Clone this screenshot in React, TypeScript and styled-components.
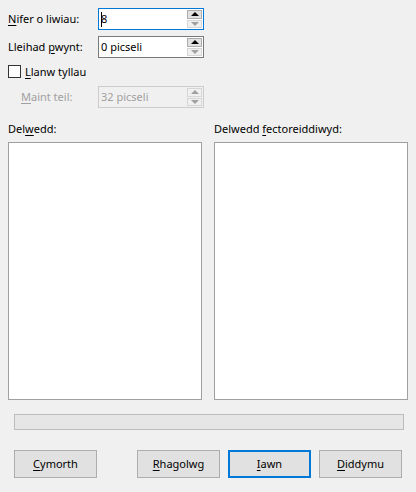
import React from "react";
import styled, { createGlobalStyle, css } from "styled-components";

const Global = createGlobalStyle`
  html, body { margin: 0; padding: 0; background: #f0f0f0; }
  body { font-family: "Noto Sans", "Open Sans", sans-serif; font-size: 11px; color: #000; }
  #root { width: 416px; height: 492px; overflow: hidden; }
`;

const Dialog = styled.div`
  width: 416px;
  height: 492px;
  box-sizing: border-box;
  padding: 8px 8px 0 8px;
  display: flex;
  flex-direction: column;
`;

const Form = styled.div`
  display: flex;
  flex-direction: column;
`;

const FieldRow = styled.div<{ $top: number; $indent?: number }>`
  display: grid;
  grid-template-columns: ${(p) => 90 - (p.$indent || 0)}px 106px;
  height: 22px;
  align-items: center;
  margin-top: ${(p) => p.$top}px;
  padding-left: ${(p) => p.$indent || 0}px;
`;

const Label = styled.span<{ $disabled?: boolean }>`
  line-height: 16px;
  white-space: nowrap;
  color: ${(p) => (p.$disabled ? "#a0a0a0" : "#000")};
`;

const U = styled.span`
  text-decoration: underline;
  text-underline-offset: 2px;
`;

const SpinBox = styled.div<{ $state: "focus" | "normal" | "disabled" }>`
  box-sizing: border-box;
  height: 22px;
  display: flex;
  align-items: stretch;
  background: ${(p) => (p.$state === "disabled" ? "#f0f0f0" : "#fff")};
  border: 1px solid
    ${(p) =>
      p.$state === "focus" ? "#0078d7" : p.$state === "disabled" ? "#cccccc" : "#7a7a7a"};
  color: ${(p) => (p.$state === "disabled" ? "#a0a0a0" : "#000")};
`;

const SpinText = styled.div`
  flex: 1;
  display: flex;
  align-items: center;
  padding-left: 2px;
  line-height: 16px;
  white-space: nowrap;
`;

const Caret = styled.span`
  display: inline-block;
  width: 1px;
  height: 15px;
  background: #000;
  margin-right: -1px;
`;

const SpinButtons = styled.div`
  width: 15px;
  display: flex;
  flex-direction: column;
  padding: 1px 1px 1px 0;
  gap: 1px;
`;

const SpinBtn = styled.div<{ $active: boolean }>`
  flex: 1;
  display: flex;
  align-items: center;
  justify-content: center;
  box-sizing: border-box;
  ${(p) =>
    p.$active
      ? css`
          background: #e1e1e1;
          border: 1px solid #adadad;
        `
      : css`
          background: #f0f0f0;
          border: 1px solid #d6d6d6;
        `}
`;

const Arrow = styled.div<{ $down?: boolean; $color: string }>`
  width: 0;
  height: 0;
  border-left: 4px solid transparent;
  border-right: 4px solid transparent;
  ${(p) =>
    p.$down
      ? css`border-top: 4px solid ${p.$color};`
      : css`border-bottom: 4px solid ${p.$color};`}
`;

const CheckRow = styled.label`
  display: flex;
  align-items: center;
  height: 13px;
  margin-top: 7px;
  gap: 4px;
`;

const CheckBox = styled.span`
  width: 13px;
  height: 13px;
  box-sizing: border-box;
  border: 1px solid #333;
  background: #fff;
  flex: none;
`;

const Panels = styled.div`
  display: grid;
  grid-template-columns: 194px 194px;
  column-gap: 12px;
  margin-top: 13px;
`;

const PanelCol = styled.div`
  display: flex;
  flex-direction: column;
  gap: 5px;
`;

const PanelBox = styled.div`
  height: 258px;
  box-sizing: border-box;
  background: #fff;
  border: 1px solid #a0a0a0;
`;

const Progress = styled.div`
  margin: 14px 4px 0 6px;
  height: 16px;
  box-sizing: border-box;
  background: #e6e6e6;
  border: 1px solid #bcbcbc;
`;

const ButtonBar = styled.div`
  display: flex;
  margin: 20px 6px 0 6px;
  gap: 8px;
`;

const Spacer = styled.div`
  flex: 1;
`;

const Button = styled.button<{ $default?: boolean }>`
  width: 83px;
  height: 28px;
  box-sizing: border-box;
  font: inherit;
  color: #000;
  background: #e1e1e1;
  padding: 0;
  border: ${(p) => (p.$default ? "2px solid #0078d7" : "1px solid #adadad")};
  line-height: 16px;
`;

function Spin({
  value,
  state,
  upActive,
  caret,
}: {
  value: string;
  state: "focus" | "normal" | "disabled";
  upActive: boolean;
  caret?: boolean;
}) {
  const up = upActive ? "#000" : "#a0a0a0";
  return (
    <SpinBox $state={state}>
      <SpinText>
        {caret && <Caret />}
        {value}
      </SpinText>
      <SpinButtons>
        <SpinBtn $active={upActive}>
          <Arrow $color={up} />
        </SpinBtn>
        <SpinBtn $active={false}>
          <Arrow $down $color="#a0a0a0" />
        </SpinBtn>
      </SpinButtons>
    </SpinBox>
  );
}

export default function App() {
  return (
    <>
      <Global />
      <Dialog>
        <Form>
          <FieldRow $top={0}>
            <Label>
              <U>N</U>ifer o liwiau:
            </Label>
            <Spin value="8" state="focus" upActive caret />
          </FieldRow>
          <FieldRow $top={6}>
            <Label>
              Lleihad <U>p</U>wynt:
            </Label>
            <Spin value="0 picseli" state="normal" upActive />
          </FieldRow>
          <CheckRow>
            <CheckBox />
            <Label>
              <U>L</U>lanw tyllau
            </Label>
          </CheckRow>
          <FieldRow $top={8} $indent={13}>
            <Label $disabled>
              <U>M</U>aint teil:
            </Label>
            <Spin value="32 picseli" state="disabled" upActive={false} />
          </FieldRow>
        </Form>
        <Panels>
          <PanelCol>
            <Label>
              Del<U>w</U>edd:
            </Label>
            <PanelBox />
          </PanelCol>
          <PanelCol>
            <Label>
              Delwedd <U>f</U>ectoreiddiwyd:
            </Label>
            <PanelBox />
          </PanelCol>
        </Panels>
        <Progress />
        <ButtonBar>
          <Button>
            <U>C</U>ymorth
          </Button>
          <Spacer />
          <Button>
            <U>R</U>hagolwg
          </Button>
          <Button $default>
            <U>I</U>awn
          </Button>
          <Button>
            <U>D</U>iddymu
          </Button>
        </ButtonBar>
      </Dialog>
    </>
  );
}
